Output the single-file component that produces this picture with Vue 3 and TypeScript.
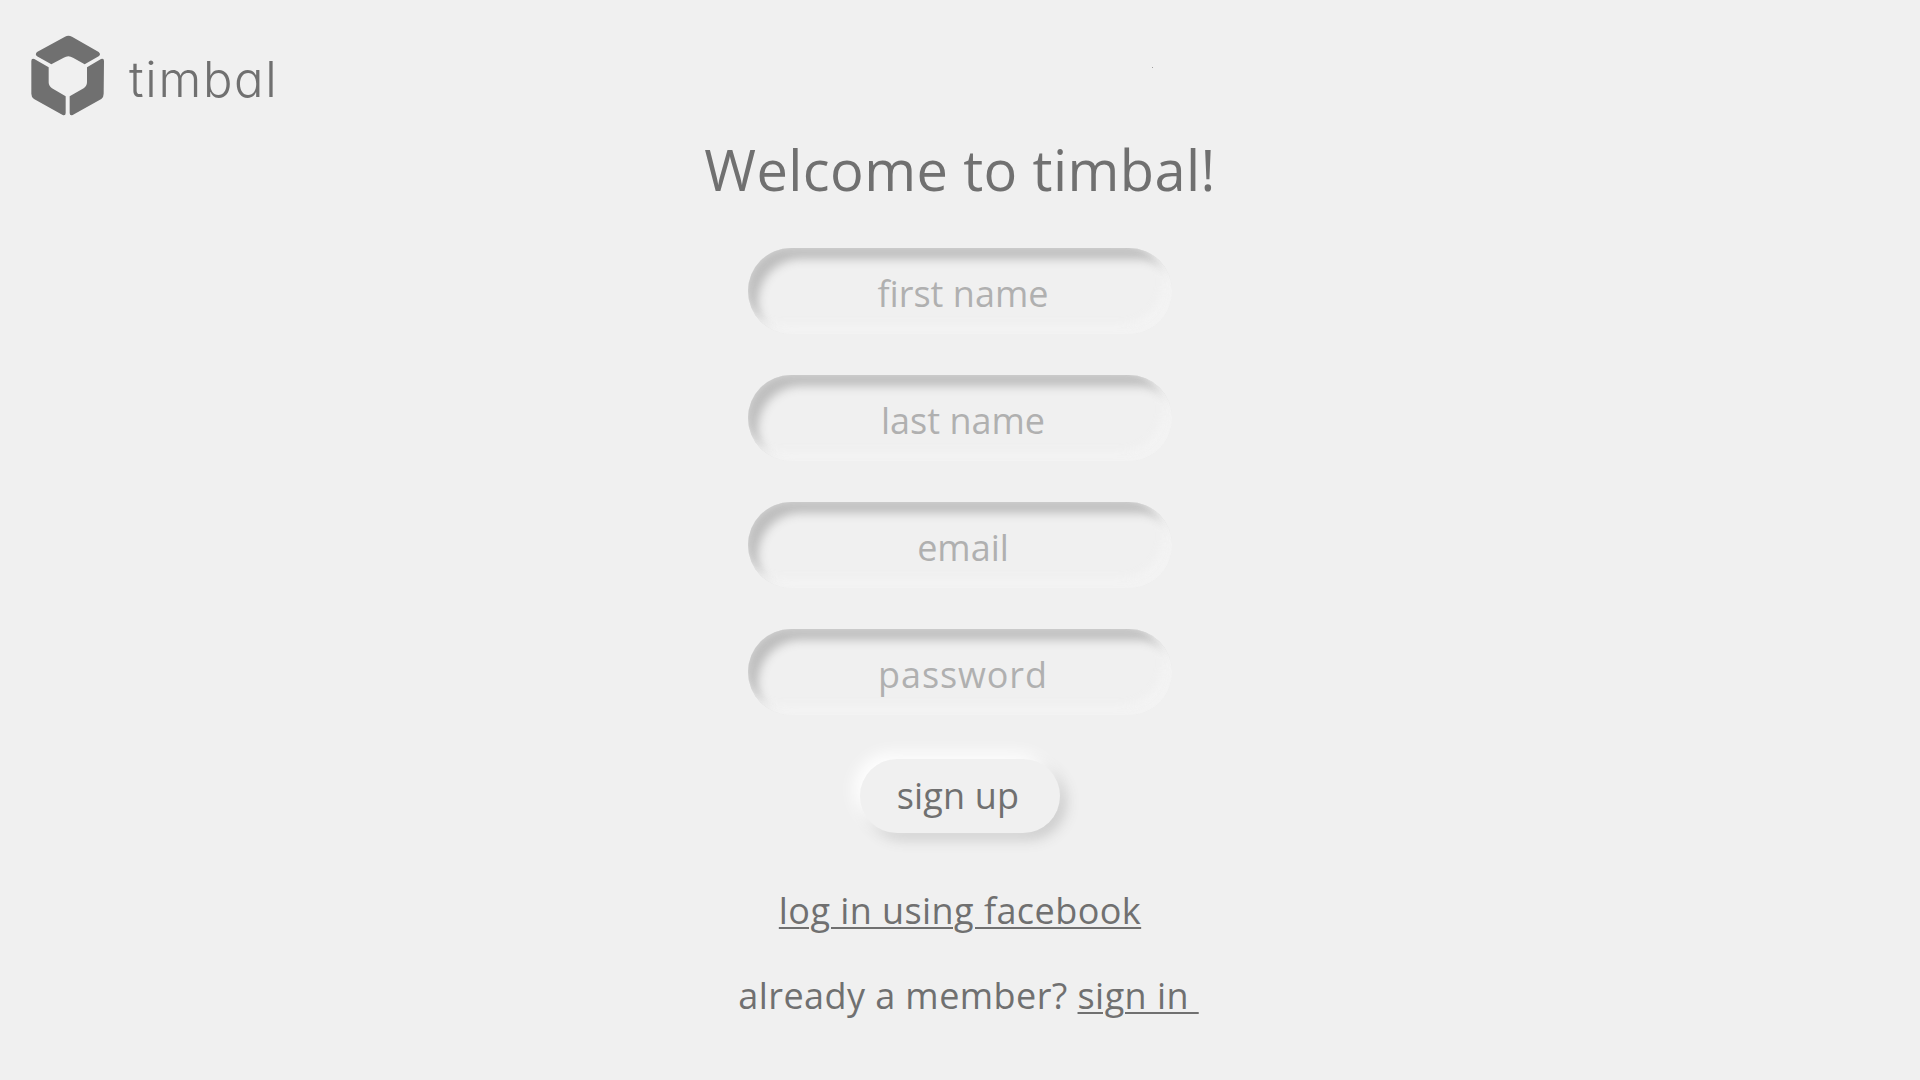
<script setup lang="ts">
import { ref } from 'vue'

interface Field {
  name: string
  type: string
  label: string
}

const fields: Field[] = [
  { name: 'first', type: 'text', label: 'first name' },
  { name: 'last', type: 'text', label: 'last name' },
  { name: 'email', type: 'email', label: 'email' },
  { name: 'password', type: 'password', label: 'password' },
]
const values = ref<Record<string, string>>({ first: '', last: '', email: '', password: '' })
</script>

<template>
  <div class="page">
    <header class="brand">
      <svg class="mark" viewBox="33 31 222 241" aria-hidden="true">
        <path d="M135 35Q145 30 156 35L236 81Q244 88 236 94L194 118L159 98Q145 89 131 98L94 118L51 94Q44 88 51 81Z" />
        <path d="M34 108Q34 99 43 102L86 127V172Q86 183 96 190L137 214V264Q137 273 128 270L42 222Q34 217 34 206Z" />
        <path d="M252 108Q252 99 243 102L201 127V172Q201 183 191 190L149 214V264Q149 273 158 270L244 222Q251 217 251 206Z" />
      </svg>
      <span class="wordmark">timbal</span>
      <i class="speck"></i>
    </header>
    <main>
      <h1>Welcome to timbal!</h1>
      <form @submit.prevent>
        <input
          v-for="f in fields"
          :key="f.name"
          v-model="values[f.name]"
          :class="f.name"
          :type="f.type"
          :placeholder="f.label"
        />
        <button type="submit">sign up</button>
      </form>
      <a class="facebook">log in using facebook</a>
      <p class="member"><span>already a member? </span><a>sign in&nbsp;</a></p>
    </main>
  </div>
</template>

<style>
body {
  background: #f0f0f0;
}
</style>

<style scoped>
.page {
  height: 1080px;
  overflow: hidden;
  background: #f0f0f0;
  color: #707070;
  font-family: 'Open Sans', sans-serif;
  font-size: 36px;
  font-weight: 400;
}
.brand {
  display: flex;
  align-items: flex-start;
  height: 134px;
  padding: 35px 0 0 31px;
  box-sizing: border-box;
  position: relative;
}
.mark {
  width: 74px;
  height: 81px;
  fill: #707070;
}
.wordmark {
  margin: 15px 0 0 24px;
  font: 300 49px/60px Inter, sans-serif;
  font-feature-settings: 'cv11';
  letter-spacing: 1.7px;
}
.speck {
  position: absolute;
  left: 1152px;
  top: 67px;
  width: 1px;
  height: 1px;
  background: #a0a0a0;
}
main {
  display: flex;
  flex-direction: column;
  align-items: center;
}
h1 {
  margin: 0;
  height: 114px;
  font-size: 56px;
  line-height: 70px;
  font-weight: 400;
  letter-spacing: 0.4px;
  white-space: nowrap;
}
form {
  display: flex;
  flex-direction: column;
  align-items: center;
}
input {
  box-sizing: border-box;
  width: 424px;
  height: 86px;
  margin: 0 0 41px;
  padding: 4px 0 0 6px;
  border: 0;
  outline: 0;
  border-radius: 43px;
  background: #f0f0f0;
  color: #707070;
  font: inherit;
  text-align: center;
  box-shadow:
    inset 0 0 8px rgba(240, 240, 240, 0.55),
    inset -9px -9px 10px rgba(244, 244, 244, 0.9),
    inset 10px 11px 10px #bebebe;
}
input::placeholder {
  color: #b0b0b0;
  opacity: 1;
}
.password {
  letter-spacing: 0.9px;
}
button {
  width: 200px;
  height: 74px;
  margin: 3px 0 0;
  padding: 0 4px 2px 0;
  border: 0;
  border-radius: 37px;
  background: #f0f0f0;
  color: inherit;
  font: inherit;
  letter-spacing: 0.2px;
  white-space: nowrap;
  box-shadow: -6px -6px 16px #fff, 6px 6px 14px #c9c9c9;
}
a {
  text-decoration: underline;
  text-decoration-thickness: 2px;
  text-underline-offset: 3px;
}
.facebook {
  margin-top: 53px;
  line-height: 50px;
  letter-spacing: 0.43px;
}
.member {
  margin: 35px 0 0 17px;
  line-height: 50px;
  letter-spacing: 0.43px;
  white-space: pre;
}
</style>
